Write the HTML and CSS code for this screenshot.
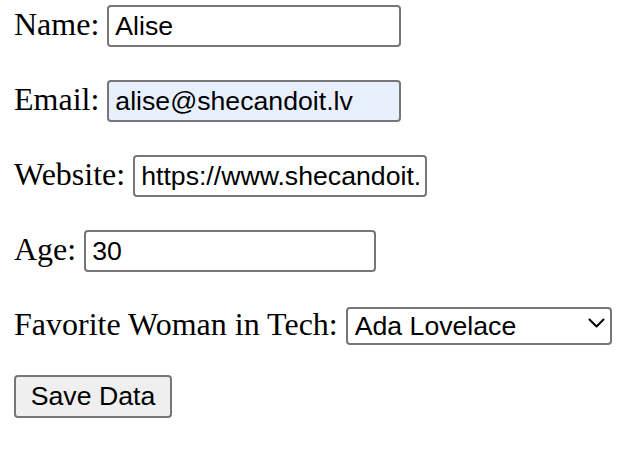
FILE: index.html
```html
<!DOCTYPE html>
<html lang="en">
<head>
<meta charset="utf-8">
<title>Form</title>
<link rel="stylesheet" href="styles.css">
</head>
<body>
<form class="form">
  <div class="row">
    <label class="label" for="name">Name:</label>
    <input class="field" id="name" type="text" value="Alise">
  </div>
  <div class="row">
    <label class="label" for="email">Email:</label>
    <input class="field autofill" id="email" type="email" value="alise@shecandoit.lv">
  </div>
  <div class="row">
    <label class="label" for="website">Website:</label>
    <input class="field" id="website" type="text" value="https://www.shecandoit.lv">
  </div>
  <div class="row">
    <label class="label" for="age">Age:</label>
    <input class="field field-age" id="age" type="text" value="30">
  </div>
  <div class="row row-select">
    <label class="label" for="woman">Favorite Woman in Tech:</label>
    <span class="select-wrap">
      <select class="select" id="woman">
        <option>Ada Lovelace</option>
        <option>Grace Hopper</option>
        <option>Margaret Hamilton</option>
      </select>
      <svg class="chevron" width="17" height="10" viewBox="0 0 17 10" aria-hidden="true"><path d="M1.5 1.5 L8.5 8.5 L15.5 1.5" fill="none" stroke="#000" stroke-width="2" stroke-linecap="round" stroke-linejoin="round"/></svg>
    </span>
  </div>
  <div class="row row-button">
    <button class="button" type="button">Save Data</button>
  </div>
</form>
</body>
</html>
```

FILE: styles.css
```css
html, body {
  margin: 0;
  padding: 0;
  background: #ffffff;
}

body {
  font-family: "Liberation Serif", "Times New Roman", serif;
  font-size: 32px;
  color: #000000;
}

.form {
  display: flex;
  flex-direction: column;
  padding: 5px 0 0 14px;
  gap: 33px;
}

.row {
  display: flex;
  align-items: baseline;
  height: 42px;
}

.label {
  margin-right: 8px;
  line-height: 37px;
}

.field {
  box-sizing: border-box;
  width: 294px;
  height: 42px;
  margin: 0;
  padding: 0 6px;
  border: 2px solid #767676;
  border-radius: 4px;
  background: #ffffff;
  font-family: "Liberation Sans", Arial, sans-serif;
  font-size: 26.67px;
  color: #000000;
  outline: none;
}

.field-age {
  width: 292px;
}

.autofill {
  background: #e8f0fe;
}

.row-select {
  height: 38px;
  margin-top: 1px;
}

.select-wrap {
  position: relative;
  display: inline-block;
}

.select {
  box-sizing: border-box;
  width: 266px;
  height: 38px;
  margin: 0;
  padding: 0 30px 0 7px;
  border: 2px solid #767676;
  border-radius: 4px;
  background: #ffffff;
  font-family: "Liberation Sans", Arial, sans-serif;
  font-size: 26.67px;
  color: #000000;
  appearance: none;
  -webkit-appearance: none;
  outline: none;
}

.chevron {
  position: absolute;
  right: 7px;
  top: 12px;
}

.row-button {
  height: 43px;
  margin-top: -2px;
}

.button {
  box-sizing: border-box;
  width: 158px;
  height: 43px;
  margin: 0;
  padding: 0;
  border: 2px solid #767676;
  border-radius: 4px;
  background: #efefef;
  font-family: "Liberation Sans", Arial, sans-serif;
  font-size: 26.67px;
  color: #000000;
}
```
